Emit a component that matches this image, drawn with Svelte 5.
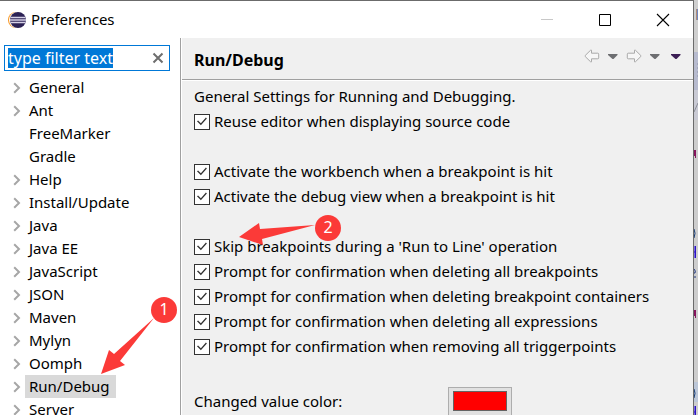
<script>
  import { onMount } from 'svelte';

  let filter = $state('type filter text');
  let filterBox;

  const pages = [
    { name: 'General', children: true },
    { name: 'Ant', children: true },
    { name: 'FreeMarker' },
    { name: 'Gradle' },
    { name: 'Help', children: true },
    { name: 'Install/Update', children: true },
    { name: 'Java', children: true },
    { name: 'Java EE', children: true },
    { name: 'JavaScript', children: true },
    { name: 'JSON', children: true },
    { name: 'Maven', children: true },
    { name: 'Mylyn', children: true },
    { name: 'Oomph', children: true },
    { name: 'Run/Debug', children: true },
    { name: 'Server', children: true }
  ];
  let current = $state('Run/Debug');

  const groups = [
    ['Reuse editor when displaying source code'],
    [
      'Activate the workbench when a breakpoint is hit',
      'Activate the debug view when a breakpoint is hit'
    ],
    [
      "Skip breakpoints during a 'Run to Line' operation",
      'Prompt for confirmation when deleting all breakpoints',
      'Prompt for confirmation when deleting breakpoint containers',
      'Prompt for confirmation when deleting all expressions',
      'Prompt for confirmation when removing all triggerpoints'
    ]
  ];

  onMount(() => {
    filterBox.focus();
    filterBox.select();
  });
</script>

<div class="screen">
  <main class="window">
    <header class="titlebar">
      <svg class="logo" width="18" height="18" viewBox="0 0 18 18" aria-hidden="true">
        <circle cx="8" cy="9" r="8" fill="#f7941e" />
        <circle cx="9" cy="9" r="8" fill="#fff" />
        <circle cx="10" cy="9" r="8" fill="#2c2255" />
        <path d="M2.5 6.5h15M2 9h16M2.5 11.5h15" stroke="#d5d1e6" stroke-width="1.4" />
      </svg>
      <h1>Preferences</h1>
      <div class="controls">
        <button aria-label="Minimize" disabled>
          <svg width="14" height="14" viewBox="0 0 14 14"><path d="M1 6.5h12" stroke="#c8c8c8" /></svg>
        </button>
        <button aria-label="Maximize">
          <svg width="14" height="14" viewBox="0 0 14 14"><path d="M1.5 1.5h11v11h-11z" fill="none" stroke="#000" /></svg>
        </button>
        <button aria-label="Close">
          <svg width="14" height="14" viewBox="0 0 14 14"><path d="M1 1l12 12M13 1L1 13" stroke="#000" stroke-width="1.1" /></svg>
        </button>
      </div>
    </header>

    <div class="body">
      <nav class="sidebar">
        <div class="filter">
          <input aria-label="Filter" bind:this={filterBox} bind:value={filter} />
          <button aria-label="Clear filter" onclick={() => (filter = '')}>
            <svg width="12" height="12" viewBox="0 0 12 12"><path d="M1.5 1.5l9 9M10.5 1.5l-9 9" stroke="#6e6e6e" stroke-width="2" /></svg>
          </button>
        </div>
        <ul>
          {#each pages as page}
            <li>
              <span class="twisty">
                {#if page.children}
                  <svg width="8" height="12" viewBox="0 0 8 12"><path d="M1.2 1.2L6 6l-4.8 4.8" fill="none" stroke="#a6a6a6" stroke-width="2" /></svg>
                {/if}
              </span>
              <button class:selected={page.name === current} onclick={() => (current = page.name)}>{page.name}</button>
            </li>
          {/each}
        </ul>
      </nav>

      <section class="page">
        <div class="heading">
          <h2>Run/Debug</h2>
          <div class="history">
            <button aria-label="Back">
              <svg width="16" height="14" viewBox="0 0 16 14"><path d="M7.5 1.2v3h6.3q.9 0 .9.9v3.8q0 .9-.9.9H7.5v3q-.4.3-.9 0L1.2 7.5q-.3-.5 0-1L6.600 1.200q.5-.3.9 0z" fill="#f6f6f6" stroke="#a9a9a9" /></svg>
            </button>
            <button aria-label="Back history">
              <svg width="10" height="5" viewBox="0 0 10 5"><path d="M0 0h9.500v1L5.500 5h-1L0 1z" fill="#6d6e71" /></svg>
            </button>
            <button aria-label="Forward">
              <svg width="16" height="14" viewBox="0 0 16 14"><path d="M8.500 1.200v3H2.200q-.9 0-.9.9v3.800q0 .9.9.9h6.300v3q.4.3.9 0l5.400-5.300q.3-.5 0-1L9.400 1.200q-.5-.3-.9 0z" fill="#f6f6f6" stroke="#a9a9a9" /></svg>
            </button>
            <button aria-label="Forward history">
              <svg width="10" height="5" viewBox="0 0 10 5"><path d="M0 0h9.500v1L5.500 5h-1L0 1z" fill="#6d6e71" /></svg>
            </button>
            <button aria-label="View menu">
              <svg width="10" height="5" viewBox="0 0 10 5"><path d="M0 0h9.500v1L5.500 5h-1L0 1z" fill="#3c1f55" /></svg>
            </button>
          </div>
        </div>

        <form class="settings">
          <p>General Settings for Running and Debugging.</p>
          {#each groups as group}
            <div class="group">
              {#each group as option}
                <label class="option"><input type="checkbox" checked /><span>{option}</span></label>
              {/each}
            </div>
          {/each}
          <div class="color-row">
            <label for="changed-color">Changed value color:</label>
            <button id="changed-color" type="button" class="swatch" aria-label="Changed value color"><span></span></button>
          </div>
        </form>
      </section>
    </div>
  </main>

  <svg class="behind" width="4" height="415" viewBox="0 0 4 415" aria-hidden="true">
    <rect width="4" height="52" fill="#cfcfcf" />
    <rect y="52" width="4" height="38" fill="#b7bbcf" />
    <rect y="90" width="4" height="30" fill="#c9cad4" />
    <rect y="120" width="4" height="262" fill="#cdcdcd" />
    <rect y="382" width="4" height="20" fill="#bcc7d8" />
    <rect y="402" width="4" height="13" fill="#cdcdcd" />
    <path d="M2 9h2v11H2z" fill="#b08c78" />
    <path d="M3 9h1v11H3z" fill="#6f86bd" />
    <path d="M3 64h1M3 68h1M3 72h1M3 76h1" stroke="#8e93a8" />
    <path d="M0 112l4-9" stroke="#8b8f99" />
    <path d="M0 150h1v6H0zM1 150h1v8H1zM0 310h1v6H0zM1 310h1v8H1z" fill="#86145c" />
    <path d="M0 229q2 4 0 9M0 389q2 4 0 9" stroke="#173d77" fill="none" />
    <path d="M0 246h2v12H0zM0 406h2v9H0z" fill="#7668e2" />
    <path d="M0 252h2M0 412h2M1.500 246v12M1.500 406v9" stroke="#2c12c4" />
    <path d="M0 269q2 2 1 4H0M0 277h2" stroke="#20367e" fill="none" />
  </svg>

  <svg class="marks" width="698" height="415" viewBox="0 0 698 415">
    <g fill="#fb3a38">
      <path d="M154 318L114 354l-5-4-8 24 24-9-5-4z" />
      <circle cx="164" cy="310" r="13" />
      <path d="M315 225l-55 4-1-6-20 14 24 8-1-6z" />
      <circle cx="328" cy="228" r="13" />
    </g>
    <g fill="#fff" text-anchor="middle" font-size="16">
      <text x="164" y="315">1</text>
      <text x="328" y="233">2</text>
    </g>
  </svg>
</div>

<style>
  :global(body) {
    margin: 0;
    overflow: hidden;
  }
  .screen {
    position: relative;
    display: flex;
    height: 100vh;
    overflow: hidden;
    font: 15px/23px 'Noto Sans', 'Open Sans', sans-serif;
    color: #000;
    background: #cdcdcd;
  }
  button {
    display: flex;
    align-items: center;
    justify-content: center;
    padding: 0;
    border: 0;
    background: none;
    font: inherit;
    color: inherit;
  }
  .window {
    box-sizing: border-box;
    flex: 1;
    min-width: 0;
    display: flex;
    flex-direction: column;
    border-top: 1px solid #6b6b6b;
    border-right: 1px solid #6b6b6b;
    background: #fff;
  }
  .behind {
    flex: none;
  }
  .titlebar {
    flex: none;
    display: flex;
    align-items: center;
    height: 37px;
    padding-left: 8px;
  }
  h1,
  h2,
  p,
  ul {
    margin: 0;
    padding: 0;
  }
  h1 {
    flex: 1;
    padding-left: 5px;
    font-size: 15px;
    font-weight: 400;
  }
  .controls {
    display: flex;
    padding-right: 1px;
  }
  .controls button {
    width: 58px;
    height: 36px;
  }
  .body {
    flex: 1;
    min-height: 0;
    display: flex;
  }
  .sidebar {
    box-sizing: border-box;
    flex: none;
    width: 182px;
    padding-top: 7px;
    border-right: 1px solid #fff;
    box-shadow: inset -1px 0 #a0a0a0;
  }
  .filter {
    box-sizing: border-box;
    display: flex;
    align-items: center;
    height: 26px;
    margin: 0 11px 5px 4px;
    padding: 0 5px 0 3px;
    border: 1px solid #0078d7;
  }
  .filter input {
    flex: 1;
    min-width: 0;
    height: 20px;
    padding: 0;
    border: 0;
    outline: 0;
    background: #fff;
    font: inherit;
    font-size: 16px;
    line-height: 20px;
  }
  .filter input::selection {
    background: #0078d7;
    color: #fff;
  }
  ul {
    list-style: none;
  }
  li {
    display: flex;
    height: 23px;
  }
  .twisty {
    display: flex;
    align-items: center;
    width: 12px;
    padding-left: 13px;
  }
  li button {
    padding: 0 6px 0 4px;
  }
  .selected {
    background: #d9d9d9;
  }
  .page {
    flex: 1;
    min-width: 0;
    background: #f0f0f0;
  }
  .heading {
    display: flex;
    align-items: center;
    height: 41px;
    padding: 0 12px;
    border-bottom: 1px solid #a0a0a0;
    box-shadow: 0 1px #fff;
  }
  h2 {
    flex: 1;
    padding-top: 4px;
    font-size: 16px;
    font-weight: 700;
  }
  .history {
    display: flex;
    align-items: center;
    gap: 8px;
    padding-bottom: 5px;
  }
  .history button:last-child {
    padding-left: 3px;
  }
  .settings {
    padding: 4px 12px 0;
    line-height: 25px;
  }
  .group {
    margin-bottom: 25px;
  }
  .option {
    display: flex;
    align-items: center;
    gap: 4px;
    height: 25px;
    white-space: nowrap;
  }
  .option input {
    appearance: none;
    box-sizing: border-box;
    display: flex;
    flex: none;
    width: 16px;
    height: 16px;
    margin: 0;
    border: 1px solid #333;
    background: #fff;
  }
  .option input:checked::before {
    content: '';
    flex: 1;
    background: #333;
    clip-path: polygon(14% 49%, 22% 42%, 42% 63%, 78% 21%, 85% 28%, 42% 77%);
  }
  .color-row {
    display: grid;
    grid-template-columns: 254px auto;
    align-items: center;
    justify-content: start;
    height: 34px;
  }
  .swatch {
    box-sizing: border-box;
    width: 64px;
    height: 29px;
    border: 1px solid #adadad;
    background: #e1e1e1;
  }
  .swatch span {
    box-sizing: border-box;
    width: 54px;
    height: 20px;
    border: 1px solid #646464;
    background: #f00;
  }
  .marks {
    position: absolute;
    top: 0;
    left: 0;
    pointer-events: none;
  }
</style>
